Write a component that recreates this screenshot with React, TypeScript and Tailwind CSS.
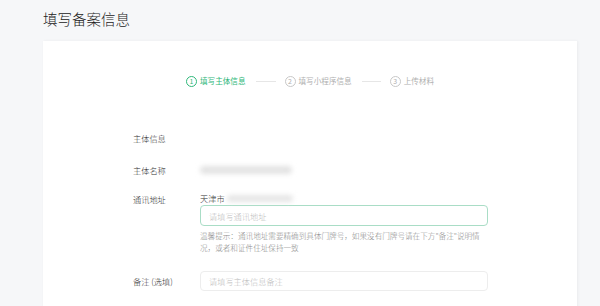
import React from "react";

const font = { fontFamily: '"Noto Sans CJK SC", "Noto Sans", sans-serif' };

function Circle({ n, active }: { n: number; active?: boolean }) {
  return (
    <span
      className={
        "flex h-[11px] w-[11px] items-center justify-center rounded-full border text-[7px] leading-none " +
        (active ? "border-[#2fb87a] text-[#2fb87a]" : "border-[#c8c8c8] text-[#b0b0b0]")
      }
    >
      {n}
    </span>
  );
}

export default function App() {
  return (
    <div className="h-[306px] w-[600px] overflow-hidden bg-[#f6f7f9]" style={font}>
      <div className="px-[43px] pt-[9px]">
        <h1 className="text-[14.5px] font-light leading-[20px] text-[#222]">填写备案信息</h1>
        <div className="mt-[12px] h-[300px] w-[534px] bg-white shadow-[1px_0_3px_rgba(0,0,0,0.05)]">
          <div className="flex items-center justify-center pt-[34px] text-[7.6px] leading-[12px]">
            <div className="flex items-center gap-[3px] text-[#2fb87a]">
              <Circle n={1} active />
              <span>填写主体信息</span>
            </div>
            <div className="ml-[10px] mr-[9px] h-px w-[20px] bg-[#e6e6e6]" />
            <div className="flex items-center gap-[3px] text-[#b0b0b0]">
              <Circle n={2} />
              <span>填写小程序信息</span>
            </div>
            <div className="ml-[10px] mr-[9px] h-px w-[19px] bg-[#e6e6e6]" />
            <div className="flex items-center gap-[3px] text-[#b0b0b0]">
              <Circle n={3} />
              <span>上传材料</span>
            </div>
          </div>

          <div className="pl-[90px] text-[8.2px] font-light leading-[12px] text-[#333]">
            <div className="mt-[45px]">主体信息</div>
            <div className="mt-[20px] flex">
              <div className="w-[67px]">主体名称</div>
              <div className="mt-[2px] h-[8px] w-[92px] rounded-full bg-[#e3e3e3] blur-[2.5px]" />
            </div>
            <div className="mt-[16px] flex">
              <div className="w-[67px] pt-[1px]">通讯地址</div>
              <div className="w-[288px]">
                <div className="flex items-center">
                  <span className="text-[#333]">天津市</span>
                  <div className="ml-[2px] h-[7px] w-[66px] rounded-full bg-[#e6e6e6] blur-[2.5px]" />
                </div>
                <div className="mt-[1px] flex h-[21px] items-center rounded-[4px] border border-[#a9ddc6] px-[8px] text-[#bdbdbd]">
                  请填写通讯地址
                </div>
                <p className="mt-[4px] text-[7.6px] leading-[12px] text-[#8a8a8a]">
                  温馨提示：通讯地址需要精确到具体门牌号，如果没有门牌号请在下方"备注"说明情况，或者和证件住址保持一致
                </p>
              </div>
            </div>
            <div className="mt-[17px] flex">
              <div className="w-[67px] pt-[4px]">备注 (选填)</div>
              <div className="flex h-[20px] w-[288px] items-center rounded-[4px] border border-[#ededed] px-[8px] text-[#bdbdbd]">
                请填写主体信息备注
              </div>
            </div>
          </div>
        </div>
      </div>
    </div>
  );
}
